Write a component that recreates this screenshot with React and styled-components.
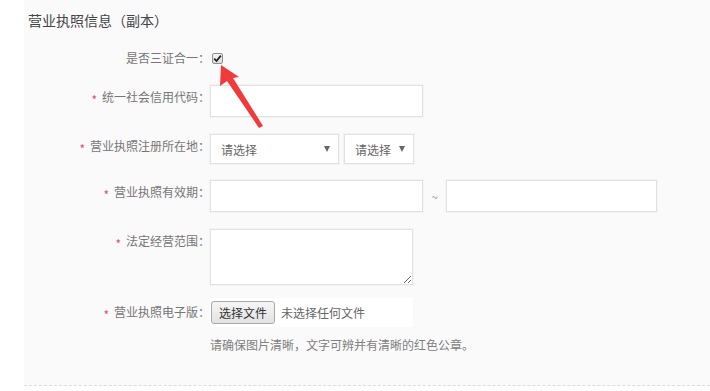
import React from "react";
import styled, { createGlobalStyle } from "styled-components";

const Global = createGlobalStyle`
  html, body { margin: 0; padding: 0; background: #fff; }
  body { font-family: "Noto Sans CJK SC", "Noto Sans", sans-serif; font-size: 12px; color: #666; }
`;

const Page = styled.div`
  position: relative;
  padding-left: 24px;
  width: 686px;
`;

const Panel = styled.section`
  background: #fafafa;
  padding-bottom: 31px;
  border-bottom: 1px dashed #dcdcdc;
`;

const Title = styled.h3`
  margin: 0;
  padding-left: 4px;
  height: 40px;
  line-height: 40px;
  font-size: 14px;
  font-weight: normal;
  color: #444;
`;

const Row = styled.div`
  display: flex;
  align-items: flex-start;
  margin-top: ${(p) => p.$mt}px;
`;

const Label = styled.label`
  width: 186px;
  flex: none;
  text-align: right;
  line-height: 18px;
  padding-top: ${(p) => p.$pt ?? 3}px;
  color: #777;
  white-space: nowrap;
`;

const Star = styled.span`
  display: inline-block;
  color: #ee4a6a;
  margin-right: 5px;
  font-size: 12px;
  position: relative;
  top: 3px;
`;

const Field = styled.div`
  display: flex;
  align-items: center;
  gap: ${(p) => p.$gap ?? 0}px;
`;

const TextInput = styled.input`
  box-sizing: border-box;
  width: ${(p) => p.$w}px;
  height: 32px;
  border: 1px solid #e2e2e2;
  box-shadow: 0 0 0 1px #f3f3f3;
  background: #fff;
  outline: none;
  padding: 0 8px;
  font-family: inherit;
`;

const Tilde = styled.span`
  width: 23px;
  text-align: center;
  color: #999;
  font-size: 12px;
`;

const SelectBox = styled.div`
  box-sizing: border-box;
  width: ${(p) => p.$w}px;
  height: 30px;
  border: 1px solid #e2e2e2;
  box-shadow: 0 0 0 1px #f3f3f3;
  background: #fff;
  display: flex;
  align-items: center;
  justify-content: space-between;
  padding: 0 8px 0 10px;
  color: #666;
  font-size: 12px;
`;

const Caret = styled.span`
  width: 0;
  height: 0;
  border-left: 3px solid transparent;
  border-right: 3px solid transparent;
  border-top: 6px solid #666;
`;

const Check = styled.span`
  margin-left: 2px;
  margin-top: 4px;
  box-sizing: border-box;
  width: 11px;
  height: 11px;
  border: 1px solid #8f8f8f;
  border-radius: 2px;
  background: linear-gradient(#f4f4f4, #dcdcdc);
  display: flex;
  align-items: center;
  justify-content: center;
`;

const TextArea = styled.textarea`
  box-sizing: border-box;
  width: 203px;
  height: 56px;
  border: 1px solid #e2e2e2;
  box-shadow: 0 0 0 1px #f3f3f3;
  background: #fff;
  outline: none;
  margin: 0;
  resize: both;
  font-family: inherit;
`;

const FileWrap = styled.div`
  box-sizing: border-box;
  width: 203px;
  height: 29px;
  background: #fff;
  display: flex;
  align-items: center;
  padding-left: 1px;
  gap: 6px;
`;

const FileButton = styled.button`
  box-sizing: border-box;
  height: 23px;
  width: 64px;
  padding: 0;
  border: 1px solid #a9a9a9;
  border-radius: 3px;
  background: linear-gradient(#f6f6f6, #e2e2e2);
  color: #333;
  font-family: inherit;
  font-size: 12px;
`;

const FileName = styled.span`
  color: #666;
  font-size: 12px;
`;

const Hint = styled.p`
  margin: 9px 0 0 186px;
  line-height: 18px;
  color: #808080;
  font-size: 12px;
`;

const Arrow = styled.svg`
  position: absolute;
  left: 0;
  top: 0;
  pointer-events: none;
`;

export default function App() {
  return (
    <>
      <Global />
      <Page>
        <Panel>
          <Title>营业执照信息（副本）</Title>
          <Row $mt={9}>
            <Label $pt={0}>是否三证合一：</Label>
            <Check>
              <svg width="9" height="9" viewBox="0 0 9 9">
                <path d="M1.2 4.6 L3.5 7 L7.9 1.6" fill="none" stroke="#222" strokeWidth="1.8" />
              </svg>
            </Check>
          </Row>
          <Row $mt={18}>
            <Label><Star>*</Star>统一社会信用代码：</Label>
            <Field><TextInput $w={213} /></Field>
          </Row>
          <Row $mt={17}>
            <Label><Star>*</Star>营业执照注册所在地：</Label>
            <Field $gap={5}>
              <SelectBox $w={129}>请选择<Caret /></SelectBox>
              <SelectBox $w={70}>请选择<Caret /></SelectBox>
            </Field>
          </Row>
          <Row $mt={16}>
            <Label><Star>*</Star>营业执照有效期：</Label>
            <Field>
              <TextInput $w={213} />
              <Tilde>~</Tilde>
              <TextInput $w={211} />
            </Field>
          </Row>
          <Row $mt={17}>
            <Label><Star>*</Star>法定经营范围：</Label>
            <Field><TextArea /></Field>
          </Row>
          <Row $mt={13}>
            <Label $pt={5}><Star>*</Star>营业执照电子版：</Label>
            <Field>
              <FileWrap>
                <FileButton>选择文件</FileButton>
                <FileName>未选择任何文件</FileName>
              </FileWrap>
            </Field>
          </Row>
          <Hint>请确保图片清晰，文字可辨并有清晰的红色公章。</Hint>
        </Panel>
        <Arrow width="710" height="391" viewBox="0 0 710 391">
          <polygon
            points="221,65 220,86 227,81 259,128 263,126 233,78 239,77"
            fill="#f23a3a"
          />
        </Arrow>
      </Page>
    </>
  );
}
